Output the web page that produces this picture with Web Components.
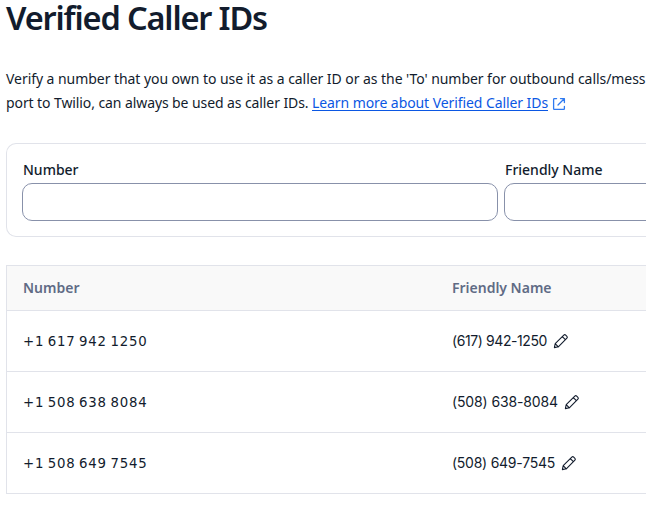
<!DOCTYPE html>
<html lang="en">
<head>
<meta charset="utf-8">
<title>Verified Caller IDs</title>
<style>
html,body{margin:0;height:100%;overflow:hidden;background:#fff}
body{font-family:"Noto Sans","Open Sans",sans-serif;color:#121c2d;font-size:14px}
</style>
</head>
<body>
<caller-page></caller-page>
<script>
/* Single line of text whose tracking is adjusted to fill the given width. */
class FitText extends HTMLElement{
  connectedCallback(){
    const root=this.attachShadow({mode:'open'});
    root.innerHTML=`<style>:host{display:inline-block;white-space:pre;flex:none}span{display:inline-block;text-decoration:var(--line,none);text-decoration-thickness:1px;text-underline-offset:2px}</style><span><slot></slot></span>`;
    const span=root.querySelector('span');
    const n=this.textContent.length, target=+this.getAttribute('width');
    const natural=span.getBoundingClientRect().width;
    if(target&&natural) span.style.letterSpacing=((target-natural)/n)+'px';
  }
}
customElements.define('fit-text',FitText);

class EditIcon extends HTMLElement{
  connectedCallback(){
    this.attachShadow({mode:'open'}).innerHTML=`<style>:host{display:block;width:16px;height:16px;flex:none}svg{display:block}</style>
    <svg width="16" height="16" viewBox="0 0 16 16" fill="none" stroke="#121c2d" stroke-width="1.1" stroke-linejoin="round" stroke-linecap="round"><path d="M1.4 14.6 2.2 10.7 10.8 2.1a1.35 1.35 0 0 1 1.9 0l1.2 1.2a1.35 1.35 0 0 1 0 1.9L5.3 13.8ZM9.3 3.6l3.1 3.1M2.2 10.7l3.1 3.1"/></svg>`;
  }
}
customElements.define('edit-icon',EditIcon);

class ExternalLink extends HTMLElement{
  connectedCallback(){
    this.attachShadow({mode:'open'}).innerHTML=`<style>:host{display:flex;align-items:center;gap:3px;--line:underline;color:#0b57e3}
    a{color:inherit;text-decoration:none}svg{display:block;margin-top:2px}</style>
    <a href="#"><slot></slot></a><svg width="16" height="16" viewBox="0 0 16 16" fill="none" stroke="#2f7af0" stroke-width="1.3" stroke-linecap="round" stroke-linejoin="round"><path d="M5.6 2.6H3.4a.8.8 0 0 0-.8.8v9.2a.8.8 0 0 0 .8.8h9.2a.8.8 0 0 0 .8-.8V10.4M9.5 2.6h3.9v3.9M13.2 2.8 7 9"/></svg>`;
  }
}
customElements.define('external-link',ExternalLink);

class FilterField extends HTMLElement{
  connectedCallback(){
    this.attachShadow({mode:'open'}).innerHTML=`<style>:host{display:block;width:476px;flex:none}
    label{display:block;height:20px;line-height:20px;padding-left:1px;font-weight:500;margin-bottom:3px}
    input{display:block;box-sizing:border-box;width:100%;height:38px;border:1px solid #8891aa;border-radius:10px;background:#fff;padding:0 12px;outline:0;font:inherit}</style>
    <label><slot></slot></label><input>`;
  }
}
customElements.define('filter-field',FilterField);

class NumberRow extends HTMLElement{
  connectedCallback(){
    const a=k=>this.getAttribute(k);
    this.attachShadow({mode:'open'}).innerHTML=`<style>:host{display:grid;grid-template-columns:429px 1fr;align-items:center;height:60px;padding-left:16px;border-bottom:1px solid #e1e3ea}
    .num{font-family:"DejaVu Sans",sans-serif;font-size:13.3px;word-spacing:-1.5px}.name{display:flex;align-items:center;gap:6px;font-family:Inter,sans-serif;font-size:14px}.name fit-text{padding-bottom:2px}</style>
    <div class="num"><fit-text width="124.5">${a('number')}</fit-text></div>
    <div class="name"><fit-text width="${a('name-width')}">${a('name')}</fit-text><edit-icon></edit-icon></div>`;
  }
}
customElements.define('number-row',NumberRow);

class CallerPage extends HTMLElement{
  connectedCallback(){
    this.attachShadow({mode:'open'}).innerHTML=`<style>
    :host{display:block;width:100%;height:519px;padding-left:6px;box-sizing:border-box}
    h1{margin:0;height:36px;line-height:36px;font-size:32.5px;font-weight:650}
    .intro{margin-top:31px;line-height:24px}
    .line{display:flex;height:24px}
    .filters{box-sizing:border-box;display:flex;gap:6px;margin-top:28px;height:94px;border:1px solid #e1e3ea;border-right:0;border-radius:10px 0 0 10px;padding:16px 0 16px 15px;overflow:hidden}
    .table{margin-top:28px;border:1px solid #e1e3ea;border-width:1px 0 0 1px}
    .head{box-sizing:border-box;display:grid;grid-template-columns:429px 1fr;align-items:center;height:45px;padding:0 0 2px 16px;background:#f9f9f9;border-bottom:1px solid #e1e3ea;color:#606b85;font-weight:600}
    </style>
    <h1><fit-text width="261">Verified Caller IDs</fit-text></h1>
    <div class="intro">
      <div class="line"><fit-text width="639.5">Verify a number that you own to use it as a caller ID or as the 'To' number for outbound calls/mess</fit-text></div>
      <div class="line"><fit-text width="306">port to Twilio, can always be used as caller IDs. </fit-text><external-link><fit-text width="236">Learn more about Verified Caller IDs</fit-text></external-link></div>
    </div>
    <div class="filters"><filter-field><fit-text width="55.5">Number</fit-text></filter-field><filter-field><fit-text width="97.5">Friendly Name</fit-text></filter-field></div>
    <div class="table">
      <div class="head"><div><fit-text width="56.5">Number</fit-text></div><div><fit-text width="99.5">Friendly Name</fit-text></div></div>
      <number-row number="+1 617 942 1250" name="(617) 942-1250" name-width="95"></number-row>
      <number-row number="+1 508 638 8084" name="(508) 638-8084" name-width="106"></number-row>
      <number-row number="+1 508 649 7545" name="(508) 649-7545" name-width="103"></number-row>
    </div>`;
  }
}
customElements.define('caller-page',CallerPage);
</script>
</body>
</html>
